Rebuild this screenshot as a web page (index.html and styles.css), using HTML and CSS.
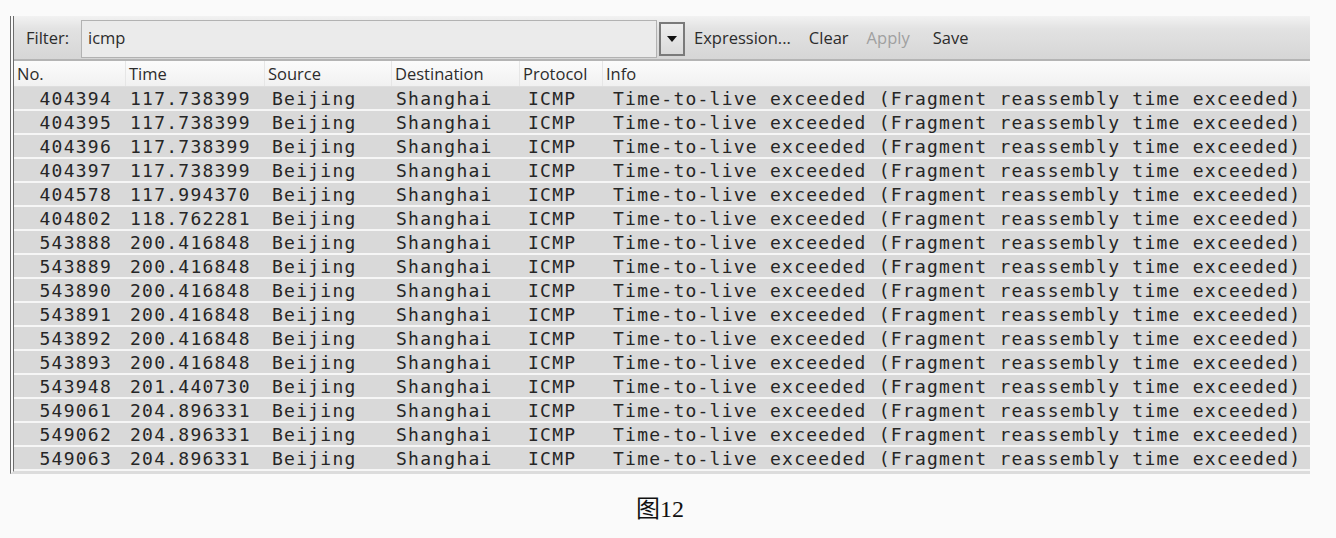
FILE: index.html
```html
<!DOCTYPE html>
<html>
<head>
<meta charset="utf-8">
<link rel="stylesheet" href="styles.css">
</head>
<body>
<div class="panel">
  <div class="toolbar">
    <span class="label">Filter:</span>
    <div class="input">icmp</div>
    <div class="drop"><svg width="10" height="6" viewBox="0 0 10 6"><path d="M0 0H10L5 6Z" fill="#111"/></svg></div>
    <span class="btn">Expression...</span>
    <span class="btn">Clear</span>
    <span class="btn disabled">Apply</span>
    <span class="btn">Save</span>
  </div>
  <div class="head">
    <div class="c no">No.</div>
    <div class="c time">Time</div>
    <div class="c src">Source</div>
    <div class="c dst">Destination</div>
    <div class="c proto">Protocol</div>
    <div class="c info">Info</div>
  </div>
  <div class="rows">
    <div class="row"><span class="no">404394</span><span class="time">117.738399</span><span class="src">Beijing</span><span class="dst">Shanghai</span><span class="proto">ICMP</span><span class="info">Time-to-live exceeded (Fragment reassembly time exceeded)</span></div>
    <div class="row"><span class="no">404395</span><span class="time">117.738399</span><span class="src">Beijing</span><span class="dst">Shanghai</span><span class="proto">ICMP</span><span class="info">Time-to-live exceeded (Fragment reassembly time exceeded)</span></div>
    <div class="row"><span class="no">404396</span><span class="time">117.738399</span><span class="src">Beijing</span><span class="dst">Shanghai</span><span class="proto">ICMP</span><span class="info">Time-to-live exceeded (Fragment reassembly time exceeded)</span></div>
    <div class="row"><span class="no">404397</span><span class="time">117.738399</span><span class="src">Beijing</span><span class="dst">Shanghai</span><span class="proto">ICMP</span><span class="info">Time-to-live exceeded (Fragment reassembly time exceeded)</span></div>
    <div class="row"><span class="no">404578</span><span class="time">117.994370</span><span class="src">Beijing</span><span class="dst">Shanghai</span><span class="proto">ICMP</span><span class="info">Time-to-live exceeded (Fragment reassembly time exceeded)</span></div>
    <div class="row"><span class="no">404802</span><span class="time">118.762281</span><span class="src">Beijing</span><span class="dst">Shanghai</span><span class="proto">ICMP</span><span class="info">Time-to-live exceeded (Fragment reassembly time exceeded)</span></div>
    <div class="row"><span class="no">543888</span><span class="time">200.416848</span><span class="src">Beijing</span><span class="dst">Shanghai</span><span class="proto">ICMP</span><span class="info">Time-to-live exceeded (Fragment reassembly time exceeded)</span></div>
    <div class="row"><span class="no">543889</span><span class="time">200.416848</span><span class="src">Beijing</span><span class="dst">Shanghai</span><span class="proto">ICMP</span><span class="info">Time-to-live exceeded (Fragment reassembly time exceeded)</span></div>
    <div class="row"><span class="no">543890</span><span class="time">200.416848</span><span class="src">Beijing</span><span class="dst">Shanghai</span><span class="proto">ICMP</span><span class="info">Time-to-live exceeded (Fragment reassembly time exceeded)</span></div>
    <div class="row"><span class="no">543891</span><span class="time">200.416848</span><span class="src">Beijing</span><span class="dst">Shanghai</span><span class="proto">ICMP</span><span class="info">Time-to-live exceeded (Fragment reassembly time exceeded)</span></div>
    <div class="row"><span class="no">543892</span><span class="time">200.416848</span><span class="src">Beijing</span><span class="dst">Shanghai</span><span class="proto">ICMP</span><span class="info">Time-to-live exceeded (Fragment reassembly time exceeded)</span></div>
    <div class="row"><span class="no">543893</span><span class="time">200.416848</span><span class="src">Beijing</span><span class="dst">Shanghai</span><span class="proto">ICMP</span><span class="info">Time-to-live exceeded (Fragment reassembly time exceeded)</span></div>
    <div class="row"><span class="no">543948</span><span class="time">201.440730</span><span class="src">Beijing</span><span class="dst">Shanghai</span><span class="proto">ICMP</span><span class="info">Time-to-live exceeded (Fragment reassembly time exceeded)</span></div>
    <div class="row"><span class="no">549061</span><span class="time">204.896331</span><span class="src">Beijing</span><span class="dst">Shanghai</span><span class="proto">ICMP</span><span class="info">Time-to-live exceeded (Fragment reassembly time exceeded)</span></div>
    <div class="row"><span class="no">549062</span><span class="time">204.896331</span><span class="src">Beijing</span><span class="dst">Shanghai</span><span class="proto">ICMP</span><span class="info">Time-to-live exceeded (Fragment reassembly time exceeded)</span></div>
    <div class="row"><span class="no">549063</span><span class="time">204.896331</span><span class="src">Beijing</span><span class="dst">Shanghai</span><span class="proto">ICMP</span><span class="info">Time-to-live exceeded (Fragment reassembly time exceeded)</span></div>
  </div>
</div>
<div class="caption">图12</div>
</body>
</html>
```
FILE: styles.css
```css
html, body {
  margin: 0;
  padding: 0;
  background: #fafafa;
}
body {
  width: 1336px;
  height: 538px;
  overflow: hidden;
}
.panel {
  margin: 16px 0 0 10px;
  width: 1300px;
  box-sizing: border-box;
  border-left: 4px double #6c6c6c;
  border-bottom: 3px solid #dcdcdc;
}
.toolbar {
  height: 45px;
  box-sizing: border-box;
  display: flex;
  align-items: center;
  background: linear-gradient(#f2f2f2 0, #e2e2e2 30%, #d6d6d6 100%);
  border-bottom: 2px solid #b4b4b4;
  font-family: "Open Sans", "Noto Sans", sans-serif;
  font-size: 16.5px;
  color: #2c2c2c;
}
.label {
  padding-left: 12px;
  width: 55px;
  flex: none;
}
.input {
  width: 576px;
  height: 38px;
  box-sizing: border-box;
  margin-top: 2px;
  border: 1px solid #b2b2b2;
  background: #ebebeb;
  padding-left: 6px;
  line-height: 34px;
  flex: none;
}
.drop {
  margin-left: 2px;
  margin-top: 2px;
  width: 26px;
  height: 34px;
  box-sizing: border-box;
  border: 2px solid #7a7a7a;
  background: linear-gradient(#eeeeee, #dadada);
  display: flex;
  align-items: center;
  justify-content: center;
  flex: none;
}
.btn {
  margin-left: 9px;
  margin-right: 18px;
}
.btn + .btn {
  margin-left: 0;
}
.btn.disabled {
  color: #a0a0a0;
  margin-right: 23px;
}
.head {
  display: flex;
  height: 26px;
  box-sizing: border-box;
  background: linear-gradient(#fbfbfb, #f1f1f1);
  border-bottom: 1px solid #dedede;
  font-family: "Open Sans", "Noto Sans", sans-serif;
  font-size: 16.5px;
  color: #2c2c2c;
  line-height: 26px;
}
.head .c {
  box-sizing: border-box;
  padding-left: 3px;
  border-right: 1px solid #e6e6e6;
  white-space: nowrap;
}
.no { width: 112px; }
.time { width: 139px; }
.src { width: 127px; }
.dst { width: 128px; }
.proto { width: 83px; }
.info { flex: 1; }
.head .c.info { border-right: none; }
.rows {
  font-family: "DejaVu Sans Mono", "Liberation Mono", monospace;
  font-size: 18px;
  letter-spacing: 1.24px;
  color: #262626;
}
.row {
  display: flex;
  height: 24px;
  box-sizing: border-box;
  border-bottom: 2px solid #f6f6f6;
  background: #d9d9d9;
  line-height: 23px;
  white-space: nowrap;
}
.row span {
  box-sizing: border-box;
  display: block;
}
.row .no {
  text-align: right;
  padding-right: 14px;
}
.row .time { padding-left: 4px; }
.row .src { padding-left: 7px; }
.row .dst { padding-left: 4px; }
.row .proto { padding-left: 8px; }
.row .info { padding-left: 10px; }
.caption {
  width: 1300px;
  margin-left: 10px;
  margin-top: 15px;
  text-align: center;
  font-family: "Liberation Serif", "Noto Sans CJK SC", serif;
  font-size: 24px;
  color: #111;
}
```
